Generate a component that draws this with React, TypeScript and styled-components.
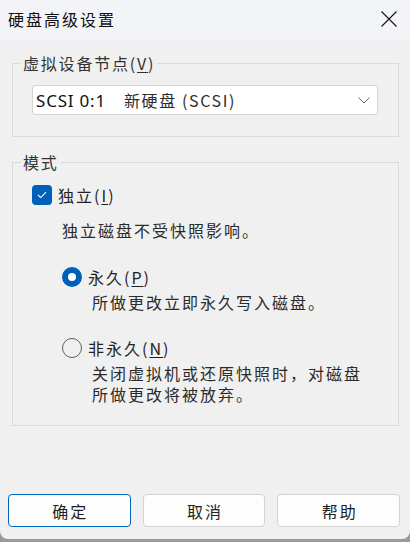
import React from 'react'
import styled, { createGlobalStyle } from 'styled-components'

const GlobalStyle = createGlobalStyle`
  html, body {
    margin: 0;
    padding: 0;
    background: #9a9a9a;
  }
  body {
    font-family: "Noto Sans CJK SC", "Noto Sans", sans-serif;
    color: #1f1f1f;
  }
`

const Window = styled.div`
  width: 410px;
  height: 539px;
  display: flex;
  flex-direction: column;
  background: #f0f0f0;
  border-radius: 0 0 8px 8px;
  overflow: hidden;
`

const TitleBar = styled.div`
  height: 40px;
  flex: none;
  display: flex;
  align-items: center;
  justify-content: space-between;
  padding: 0 13px 2px 8px;
  box-sizing: border-box;
  background: #f3f4f7;
`

const Title = styled.div`
  font-size: 16px;
  letter-spacing: 2px;
  color: #111;
`

const CloseButton = styled.button`
  border: 0;
  padding: 0;
  background: none;
  width: 16px;
  height: 16px;
  display: flex;
`

const Content = styled.div`
  padding: 13px 11px 0 12px;
  display: flex;
  flex-direction: column;
  gap: 15px;
`

const Group = styled.fieldset`
  margin: 0;
  padding: 0 8px;
  min-width: 0;
  border: 1px solid #dadada;
`

const Legend = styled.legend`
  padding: 0 2px;
  font-size: 16px;
  line-height: 20px;
  letter-spacing: 1.8px;
  color: #333;
`

const Key = styled.u`
  text-decoration: underline;
  text-underline-offset: 2px;
  text-decoration-thickness: 1px;
`

const GroupBody = styled.div<{ $pad: string }>`
  padding: ${(p) => p.$pad};
  display: flex;
  flex-direction: column;
`

const Select = styled.div`
  height: 30px;
  box-sizing: border-box;
  display: flex;
  align-items: center;
  justify-content: space-between;
  padding: 0 7px 0 3px;
  background: #fff;
  border: 1px solid #d4d4d4;
  border-radius: 3px;
  font-family: "Noto Sans", "Noto Sans CJK SC", sans-serif;
  font-size: 17px;
  letter-spacing: 0.8px;
  color: #111;
`

const SelectValue = styled.span`
  white-space: pre;
`

const DeviceName = styled.span`
  margin-left: 18px;
  color: #2c2c2c;
  font-family: "Noto Sans CJK SC", sans-serif;
  font-size: 16px;
  letter-spacing: 1.6px;
`

const Check = styled.label`
  display: flex;
  align-items: center;
  gap: 6px;
  height: 20px;
  margin: 13px 0 0 11px;
  font-size: 16px;
  letter-spacing: 2px;
`

const CheckBox = styled.span`
  width: 20px;
  height: 20px;
  box-sizing: border-box;
  display: flex;
  align-items: center;
  justify-content: center;
  background: #005fb8;
  border-radius: 4px;
`

const Note = styled.div`
  margin: 14px 0 0 41px;
  font-size: 16px;
  line-height: 22px;
  letter-spacing: 2px;
  color: #2b2b2b;
`

const Option = styled.div<{ $top: number }>`
  display: grid;
  grid-template-columns: 20px 1fr;
  column-gap: 6px;
  margin: ${(p) => p.$top}px 0 0 41px;
`

const Radio = styled.span<{ $on?: boolean }>`
  width: 20px;
  height: 20px;
  margin-top: 2px;
  box-sizing: border-box;
  border-radius: 50%;
  border: ${(p) => (p.$on ? '6px solid #005fb8' : '1px solid #5f5f5f')};
  background: ${(p) => (p.$on ? '#fff' : 'transparent')};
`

const OptionText = styled.div`
  font-size: 16px;
  letter-spacing: 2px;
`

const OptionTitle = styled.div`
  line-height: 24px;
  color: #1f1f1f;
`

const OptionDesc = styled.div`
  margin-top: 4px;
  padding-left: 4px;
  color: #2b2b2b;
  font-family: "Liberation Sans", "Noto Sans CJK SC", sans-serif;
`

const DescLine = styled.div`
  height: 21px;
  line-height: 22px;
`

const Spacer = styled.div`
  flex: 1;
`

const Footer = styled.div`
  display: grid;
  grid-template-columns: repeat(3, 1fr);
  gap: 12px;
  padding: 0 10px 12px 8px;
`

const Button = styled.button<{ $primary?: boolean }>`
  height: 33px;
  background: #fdfdfd;
  border: 1px solid ${(p) => (p.$primary ? '#0067c0' : '#d3d3d3')};
  border-radius: 4px;
  font-family: "Noto Sans CJK SC", sans-serif;
  font-size: 16px;
  letter-spacing: 2px;
  color: #1f1f1f;
  padding: 0 0 0 2px;
`

const App = () => (
  <>
    <GlobalStyle />
    <Window>
      <TitleBar>
        <Title>硬盘高级设置</Title>
        <CloseButton aria-label="关闭">
          <svg width="16" height="16" viewBox="0 0 16 16">
            <path d="M0.5 0.5 L15.5 15.5 M15.5 0.5 L0.5 15.5" stroke="#111" strokeWidth="1.1" fill="none" />
          </svg>
        </CloseButton>
      </TitleBar>

      <Content>
        <Group>
          <Legend>
            虚拟设备节点(<Key>V</Key>)
          </Legend>
          <GroupBody $pad="12px 12px 21px 11px">
            <Select>
              <SelectValue>
                SCSI 0:1<DeviceName>新硬盘 (SCSI)</DeviceName>
              </SelectValue>
              <svg width="12" height="7" viewBox="0 0 12 7">
                <path d="M0.5 0.5 L6 6 L11.5 0.5" stroke="#606060" strokeWidth="1" fill="none" />
              </svg>
            </Select>
          </GroupBody>
        </Group>

        <Group>
          <Legend>模式</Legend>
          <GroupBody $pad="0 0 19px 0">
            <Check>
              <CheckBox>
                <svg width="10" height="8" viewBox="0 0 10 8">
                  <path d="M1 4 L3.8 6.6 L9 1.2" stroke="#fff" strokeWidth="1.1" fill="none" />
                </svg>
              </CheckBox>
              <span>
                独立(<Key>I</Key>)
              </span>
            </Check>
            <Note>独立磁盘不受快照影响。</Note>

            <Option $top={24}>
              <Radio $on />
              <OptionText>
                <OptionTitle>
                  永久(<Key>P</Key>)
                </OptionTitle>
                <OptionDesc>
                  <DescLine>所做更改立即永久写入磁盘。</DescLine>
                </OptionDesc>
              </OptionText>
            </Option>

            <Option $top={22}>
              <Radio />
              <OptionText>
                <OptionTitle>
                  非永久(<Key>N</Key>)
                </OptionTitle>
                <OptionDesc>
                  <DescLine>关闭虚拟机或还原快照时，对磁盘</DescLine>
                  <DescLine>所做更改将被放弃。</DescLine>
                </OptionDesc>
              </OptionText>
            </Option>
          </GroupBody>
        </Group>
      </Content>

      <Spacer />

      <Footer>
        <Button $primary>确定</Button>
        <Button>取消</Button>
        <Button>帮助</Button>
      </Footer>
    </Window>
  </>
)

export default App
